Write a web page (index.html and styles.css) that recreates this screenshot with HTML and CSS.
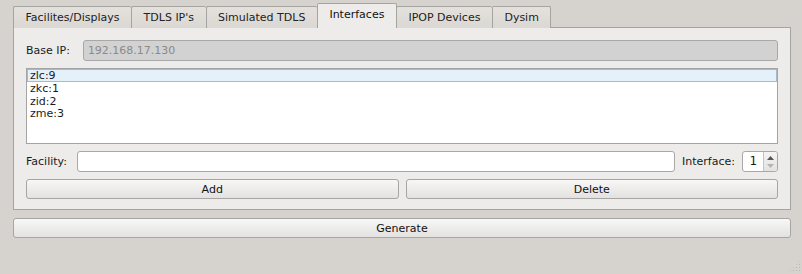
FILE: index.html
```html
<!DOCTYPE html>
<html lang="en">
<head>
    <meta charset="UTF-8">
    <title>Interfaces</title>
    <link rel="stylesheet" href="styles.css">
</head>
<body>
    <div class="window">
        <div class="tabs">
            <div class="tab">Facilites/Displays</div>
            <div class="tab">TDLS IP's</div>
            <div class="tab">Simulated TDLS</div>
            <div class="tab active">Interfaces</div>
            <div class="tab">IPOP Devices</div>
            <div class="tab">Dysim</div>
        </div>
        <div class="panel">
            <div class="row">
                <label class="base-label">Base IP:</label>
                <div class="field disabled">192.168.17.130</div>
            </div>
            <ul class="list">
                <li class="selected">zlc:9</li>
                <li>zkc:1</li>
                <li>zid:2</li>
                <li>zme:3</li>
            </ul>
            <div class="row">
                <label class="facility-label">Facility:</label>
                <div class="field"></div>
                <label>Interface:</label>
                <div class="spin">
                    <span class="spin-value">1</span>
                    <span class="spin-arrows">
                        <svg width="9" height="14" viewBox="0 0 9 14">
                            <path d="M1 5 L4.5 1 L8 5 Z" fill="#555"/>
                            <path d="M1 9 L4.5 13 L8 9 Z" fill="#b4b4b4"/>
                        </svg>
                    </span>
                </div>
            </div>
            <div class="buttons">
                <button>Add</button>
                <button>Delete</button>
            </div>
        </div>
        <button class="generate">Generate</button>
    </div>
    <div class="grip"></div>
</body>
</html>
```

FILE: styles.css
```css
body {
    margin: 0;
    background-color: #d6d3cf;
    font-family: 'DejaVu Sans', sans-serif;
    font-size: 11px;
    color: #1a1a1a;
}
.window {
    width: 778px;
    padding: 4px 11px 0 13px;
    height: 270px;
}
.tabs {
    display: flex;
    align-items: flex-end;
    height: 24px;
    margin-bottom: -1px;
    position: relative;
    z-index: 1;
}
.tab {
    height: 21px;
    line-height: 21px;
    padding: 0 11.5px;
    border: 1px solid #a6a4a1;
    border-bottom: none;
    border-right: none;
    border-radius: 2px 2px 0 0;
    background: linear-gradient(#e4e1dd, #dbd8d4);
    color: #222;
}
.tab:nth-child(6) {
    border-right: 1px solid #a6a4a1;
}
.tab.active {
    height: 24px;
    line-height: 22px;
    background: #edecea;
    border-right: 1px solid #a6a4a1;
    margin-right: -1px;
    color: #111;
}
.panel {
    background-color: #edecea;
    border: 1px solid #a6a4a1;
    padding: 12px 12px 10px 12px;
    display: flex;
    flex-direction: column;
    gap: 7px;
}
.row {
    display: flex;
    align-items: center;
    gap: 7px;
    height: 21px;
}
.base-label {
    margin-right: 6px;
}
.facility-label {
    margin-right: 3px;
}
.field {
    flex: 1;
    height: 19px;
    line-height: 19px;
    background-color: #fff;
    border: 1px solid #a8a8a8;
    border-radius: 3px;
    padding: 0 4px;
}
.field.disabled {
    background-color: #d2d2d2;
    color: #8a8a8a;
}
.list {
    list-style: none;
    margin: 0;
    padding: 0;
    height: 74px;
    background-color: #fff;
    border: 1px solid #a4a4a4;
}
.list li {
    height: 12.5px;
    line-height: 13px;
    padding-left: 3px;
}
.list li.selected {
    background-color: #e4f0fa;
    border: 1px solid #a9b9c9;
    height: 11px;
    line-height: 12px;
    padding-left: 2px;
}
.spin {
    width: 34px;
    height: 19px;
    display: flex;
    border: 1px solid #a8a8a8;
    border-radius: 3px;
    background: #fff;
}
.spin-value {
    width: 20px;
    font-family: 'DejaVu Sans Mono', monospace;
    font-size: 12px;
    line-height: 19px;
    text-align: center;
    border-right: 1px solid #c4c4c4;
}
.spin-arrows {
    flex: 1;
    display: flex;
    align-items: center;
    justify-content: center;
    background: linear-gradient(#f4f4f4, #e2e2e2);
    border-radius: 0 3px 3px 0;
}
.buttons {
    display: flex;
    gap: 7px;
}
button {
    flex: 1;
    height: 20px;
    padding: 0;
    font-family: 'DejaVu Sans', sans-serif;
    font-size: 11px;
    color: #111;
    background: linear-gradient(#f7f7f6, #e3e2e0);
    border: 1px solid #a6a5a3;
    border-radius: 3px;
}
.generate {
    display: block;
    width: 778px;
    margin-top: 8px;
}
.grip {
    position: absolute;
    right: 1px;
    top: 260px;
    width: 12px;
    height: 12px;
    background-image: radial-gradient(#b8b5b1 35%, transparent 45%);
    background-size: 3px 3px;
    clip-path: polygon(100% 0, 100% 100%, 0 100%);
}
```
